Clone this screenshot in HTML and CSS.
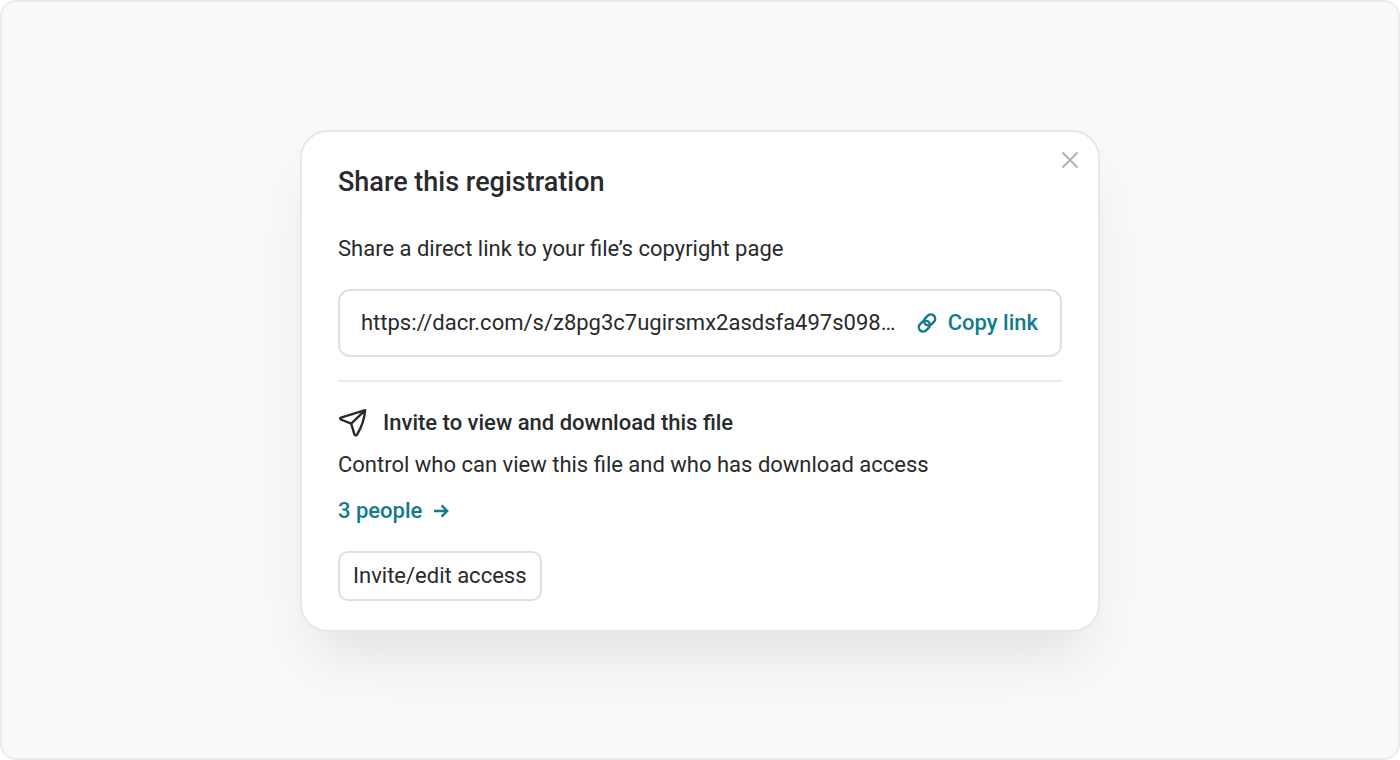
FILE: index.html
```
<!DOCTYPE html>
<html lang="en">
<head>
    <meta charset="UTF-8">
    <meta name="viewport" content="width=device-width, initial-scale=1.0">
    <title>Share this registration</title>
    <link rel="stylesheet" href="styles.css">
</head>
<body>
    <div class="stage">
        <section class="modal" role="dialog" aria-labelledby="modalTitle">
            <button type="button" class="close" aria-label="Close">
                <svg width="18" height="18" viewBox="0 0 18 18"><path d="M1.5 1.5 L16.5 16.5 M16.5 1.5 L1.5 16.5"/></svg>
            </button>
            <h1 id="modalTitle">Share this registration</h1>
            <label class="text" for="shareLink">Share a direct link to your file’s copyright page</label>
            <div class="link_field">
                <input type="text" id="shareLink" value="https://dacr.com/s/z8pg3c7ugirsmx2asdsfa497s098…" readonly>
                <button type="button" class="copy">
                    <svg width="20" height="20" viewBox="0 0 20 20">
                        <path d="M11.3 12.4 A4.3 4.3 0 0 1 7.7 5.8 L10.6 2.9 A4.3 4.3 0 0 1 17.1 8.6 L14.4 11.4 A4.3 4.3 0 0 1 11.3 12.4"/>
                        <path d="M8.7 7.6 A4.3 4.3 0 0 1 12.3 14.2 L9.4 17.1 A4.3 4.3 0 0 1 2.9 11.4 L5.6 8.6 A4.3 4.3 0 0 1 8.7 7.6"/>
                    </svg>
                    Copy link
                </button>
            </div>
            <hr>
            <h2>
                <svg class="plane" width="30" height="30" viewBox="0 0 30 30">
                    <path d="M27.2 2.2 L3 9.6 Q1.4 10.4 2.8 11.5 L13.2 15.6 L16.4 26.4 Q17.6 28.4 19.1 26.5 Q25.8 16 27.2 2.2 Z M27 2.4 L13.2 15.6"/>
                </svg>
                Invite to view and download this file
            </h2>
            <p class="text">Control who can view this file and who has download access</p>
            <a href="#" class="people">3 people
                <svg width="16" height="16" viewBox="0 0 16 16"><path d="M1 8 H14 M8.6 2.4 L14.2 8 L8.6 13.6"/></svg>
            </a>
            <button type="button" class="invite">Invite/edit access</button>
        </section>
    </div>
</body>
</html>
```
FILE: styles.css
```
* { box-sizing: border-box; }
body { margin: 0; background: #fff; color: #282a2c; font: 22px/28px Roboto, "Liberation Sans", sans-serif; }
svg { display: block; flex: none; fill: none; stroke: currentColor; stroke-width: 2; }
button, input { font: inherit; color: inherit; background: none; border: none; margin: 0; padding: 0; }
button { cursor: pointer; }

.stage { display: flex; align-items: center; justify-content: center; min-height: 100vh; padding-top: 2px; background: #f9f9f9; border: 2px solid #ebebeb; border-radius: 16px; }

.modal { position: relative; display: flex; flex-direction: column; align-items: flex-start; width: 100%; max-width: 800px; padding: 34px 36px 29px; background: #fff; border: 2px solid #e8e8e8; border-radius: 28px; box-shadow: 0 36px 60px -16px rgba(0, 0, 0, 0.1); }
.modal h1 { margin: 0 0 37px; font-size: 27px; line-height: 32px; font-weight: 500; }
.modal h2 { display: flex; align-items: center; gap: 15px; margin: 0 0 14px; font-size: 22px; line-height: 28px; font-weight: 500; }
.modal hr { width: 100%; height: 2px; margin: 23px 0 27px; background: #ebebeb; border: none; }
.text { margin: 0; }

.close { position: absolute; top: 19px; right: 19px; color: #afb2b5; }

.link_field { display: flex; align-items: center; gap: 16px; width: 100%; margin-top: 26px; padding: 18px 22px 18px 21px; border: 2px solid #dfe0e1; border-radius: 12px; }
.link_field input { flex: 1; min-width: 0; height: 28px; outline: none; text-overflow: ellipsis; }

.copy, .people { display: flex; align-items: center; gap: 11px; color: #127c8c; font-weight: 500; }
.copy svg, .people svg { stroke-width: 2.4; }
.people { margin-top: 18px; text-decoration: none; }
.invite { height: 50px; margin-top: 26px; padding: 0 13px; border: 2px solid #dfe0e3; border-radius: 10px; }
.plane { stroke-width: 2.4; stroke-linejoin: round; margin: -1px 0; }
```
